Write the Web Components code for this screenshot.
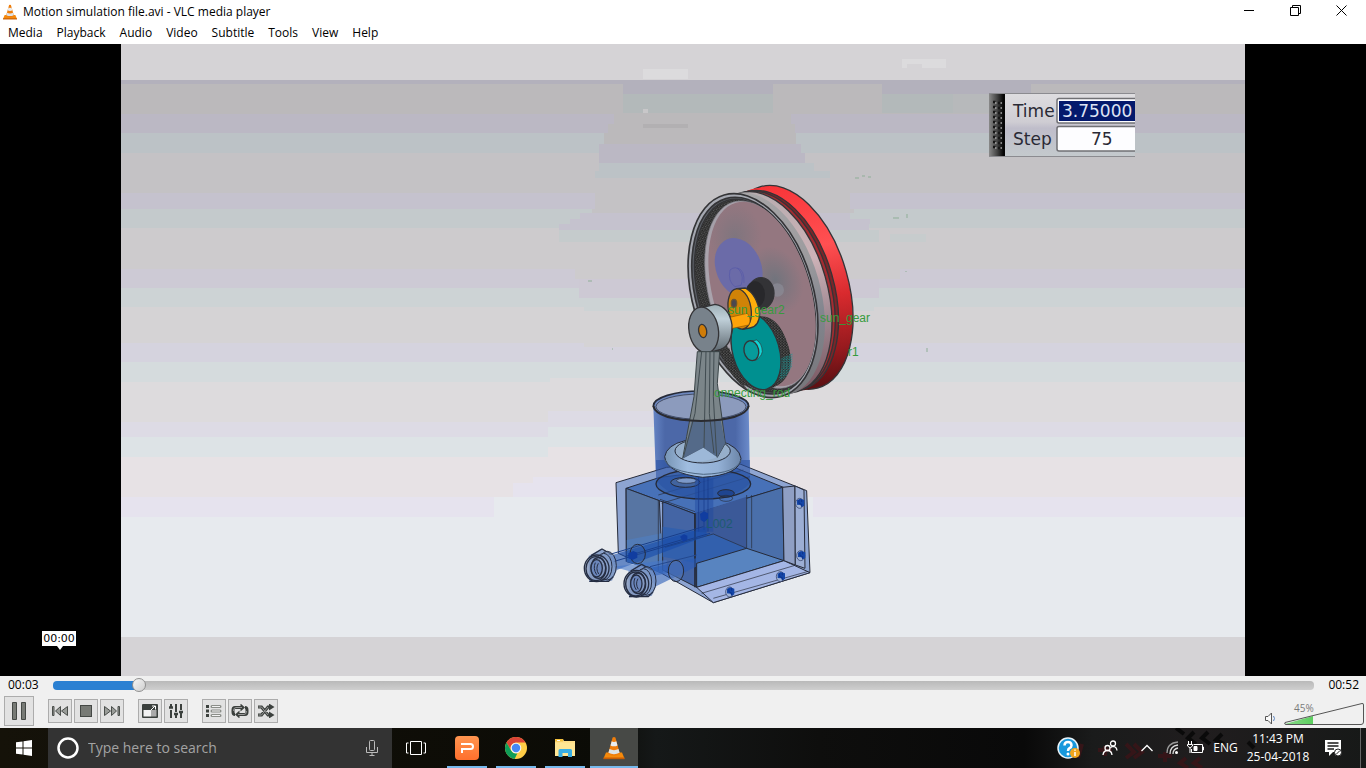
<!DOCTYPE html>
<html lang="en">
<head>
<meta charset="utf-8">
<title>Motion simulation file.avi - VLC media player</title>
<style>
html,body{margin:0;height:100%}
body{font:12px/16px "Open Sans","Noto Sans",sans-serif;color:#000;background:#fff;overflow:hidden}
</style>
</head>
<body>
<desktop-screen></desktop-screen>
<script>
const define = (name, html) => {
  const tpl = document.createElement('template');
  tpl.innerHTML = html;
  customElements.define(name, class extends HTMLElement {
    constructor() {
      super();
      this.attachShadow({mode: 'open'}).append(tpl.content.cloneNode(true));
    }
  });
};

const cone = (size) => `<svg width="${size}" height="${size}" viewBox="0 0 24 24" aria-hidden="true">
<path d="M4 16.500H20L22.500 22.500H1.500Z" fill="#f58a0c"/><path d="M1.500 21.500H22.500V23.200H1.500Z" fill="#c85d04"/>
<path d="M10.600 1.500Q12 .4 13.400 1.500L18 18Q12 21.500 6 18Z" fill="#ef7d0b"/>
<path d="M9.700 5.300Q12 6.500 14.300 5.300L15.500 9.500Q12 11.200 8.500 9.500Z" fill="#e9edf0"/>
<path d="M7.500 13Q12 15.300 16.500 13L17.600 16.800Q12 19.500 6.400 16.800Z" fill="#dfe3e6"/></svg>`;

define('title-bar', `<style>
:host{display:flex;align-items:center;height:24px;padding:0 2px;background:#fff}
h1{font:inherit;margin:0 0 0 5px;flex:1;white-space:nowrap}
.win{display:flex;align-self:flex-start}
button{width:46px;height:20px;border:0;background:none;padding:0;display:grid;place-items:center}
svg{display:block}
</style>
${cone(16)}<h1>Motion simulation file.avi - VLC media player</h1>
<div class="win">
<button aria-label="Minimize"><svg width="11" height="11"><path d="M0 5.500H10" stroke="#000"/></svg></button>
<button aria-label="Restore"><svg width="11" height="11" fill="none" stroke="#000"><path d="M.5 2.500H8.500V10.500H.5ZM2.500 2.500V.5H10.500V8.500H8.500"/></svg></button>
<button aria-label="Close"><svg width="11" height="11" stroke="#000"><path d="M.5 .5L10.500 10.500M10.500 .5L.5 10.500"/></svg></button>
</div>`);

define('menu-bar', `<style>
:host{display:block;height:20px;background:#fff}
nav{display:flex;gap:14px;padding:0 8px}
button{font:inherit;color:inherit;border:0;background:none;padding:0;line-height:18px}
</style>
<nav aria-label="Main menu"><button>Media</button><button>Playback</button><button>Audio</button><button>Video</button><button>Subtitle</button><button>Tools</button><button>View</button><button>Help</button></nav>`);

/* background bands: [top, bottom, colour] */
const bands = [[44,80,'#d5d3d6'],[80,84,'#b3b1bc'],[84,114,'#bbb9bb'],[114,133,'#bbb8c4'],[133,153,'#bcc2c6'],[153,193,'#c4c2c5'],[193,209,'#c5c2ce'],[209,228,'#c4cacc'],[228,269,'#cdcbcd'],[269,288,'#cdcad5'],[288,307,'#cdd3d5'],[307,343,'#d5d3d5'],[343,362,'#d5d3de'],[362,382,'#d5dbdd'],[382,422,'#dddbdd'],[422,437,'#dddbe5'],[437,457,'#dde3e6'],[457,497,'#e7e2e5'],[497,517,'#e6e3ee'],[517,637,'#e7eaee'],[637,676,'#d5d3d6']]
  .map(([a,b,c]) => `<rect x="121" y="${a}" width="1124" height="${b-a}" fill="${c}"/>`).join('');
/* patches where the compressed frame lags behind: [x, y, w, h, colour] */
const patches = [[623,80,150,14,'#b3b1bc'],[623,94,150,19,'#b3b9ba'],[882,80,149,14,'#b3b1bc'],[882,94,71,19,'#b3b9ba'],[953,94,36,19,'#b7b9bb'],[614,113,177,11,'#bbb9bb'],[608,124,187,9,'#bbb9bb'],[604,133,192,11,'#bbb9bb'],[599,144,202,9,'#bbb8c4'],[599,153,206,10,'#bbb8c4'],[599,163,215,8,'#bcc2c6'],[595,171,235,7,'#bcc2c6'],[595,178,255,31,'#c4c2c5'],[592,209,262,4,'#c4c2c5'],[580,213,270,6,'#c5c2ce'],[570,219,300,5,'#c5c2ce'],[559,224,310,6,'#c5c2ce'],[559,230,320,12,'#c5cbcc'],[890,234,36,8,'#c7cccd'],[565,242,325,27,'#cdcbcd'],[575,269,325,10,'#cdcbcd'],[579,279,300,19,'#cdc9d4'],[584,298,290,13,'#cdd3d5'],[584,311,200,36,'#d5d3d5'],[550,378,170,4,'#dddbdd'],[548,411,150,16,'#dddbe5'],[548,427,150,20,'#dde3e6'],[548,447,150,30,'#e7e2e5'],[533,477,160,6,'#e6e3ee'],[513,483,180,14,'#e6e3ee'],[494,497,319,20,'#e7eaee'],[643,69,45,10,'#dcdbdd'],[902,59,44,9,'#dcdbdd'],[643,124,45,4,'#b2b0b2'],[643,109,5,4,'#c8c7c9'],[907,64,15,4,'#d5d3d6']]
  .map(([x,y,w,h,c]) => `<rect x="${x}" y="${y}" width="${w}" height="${h}" fill="${c}"/>`).join('');
const dots = Array.from({length: 10}, (_, i) => `<path d="M993 ${102+i*5}h2.500M998 ${103+i*5}h2.500" stroke="#161616" stroke-width="2.500"/><path d="M995 ${103+i*5}h1.500M1000.500 ${103+i*5}h1.500" stroke="#aaa" stroke-width="1.500"/>`).join('');
const bolt = (x, y) => `<ellipse cx="${x-3}" cy="${y}" rx="12" ry="15" fill="#9fb2d6" stroke="#26345a" stroke-width="2"/><path d="M${x-11} ${y-9}l9 -5 13 4v17l-8 4 -4 -6 -10 -1z" fill="#1446a8" stroke="none"/><path d="M${x-5} ${y-10}v10l8 3v8M${x+3} ${y-12}v8" stroke="#082a80" stroke-width="2" fill="none"/>`;
const fitting = (x, y) => `<g transform="translate(${x} ${y})" stroke="#252d42" stroke-width="4">
<path d="M-32 -34L5 -56 42 -32 52 10 38 40 -30 44Z" fill="#6f8cc0" fill-opacity=".75" stroke="none"/>
<path d="M-25 -35L8 -55 38 -38M-30 42H28L42 28" fill="none"/>
<ellipse cx="24" cy="-5" rx="27" ry="43" fill="#7893c4" fill-opacity=".5" stroke-width="3"/><ellipse cx="13" cy="-2" rx="25" ry="40" fill="#88a0cb" fill-opacity=".4" stroke-width="3"/>
<ellipse cx="-8" cy="3" rx="37" ry="40" fill="#8ca1c8" fill-opacity=".5"/><ellipse cx="-10" cy="4" rx="30" ry="36" fill="#8095bb" fill-opacity=".6"/>
<ellipse cx="-3" cy="2" rx="22" ry="31" fill="none"/><ellipse cx="-8" cy="3" rx="17" ry="26" fill="#6b86bb"/><path d="M-12 -14Q-20 4 -8 22M-3 -12Q-12 4 -2 20" fill="none" stroke-width="3"/></g>`;

define('video-stage', `<style>
:host{display:block;background:#000;min-height:0}
svg{display:block;width:100%;height:100%}
.tag{font:12px "Liberation Sans",sans-serif;fill:#369b3c}
.panel{font:17px "DejaVu Sans",sans-serif;fill:#2a2a35}
.panel .selected{fill:#dfe4f4}
</style>
<svg viewBox="121 44 1124 632" role="img" aria-label="Epicyclic gear engine simulation">
<defs>
<linearGradient id="red" x1="0" y1="0" x2="0" y2="1"><stop offset="0" stop-color="#f83438"/><stop offset=".35" stop-color="#ff5052"/><stop offset=".6" stop-color="#d92a2e"/><stop offset=".85" stop-color="#961a1e"/><stop offset="1" stop-color="#5c1013"/></linearGradient>
<linearGradient id="rim" x1="0" y1="0" x2="0" y2="1"><stop offset="0" stop-color="#a8a6a8"/><stop offset=".4" stop-color="#9c9b9e"/><stop offset=".65" stop-color="#83868f"/><stop offset="1" stop-color="#77777b"/></linearGradient>
<linearGradient id="pink" x1="0" y1="0" x2="0" y2="1"><stop offset="0" stop-color="#b7acaf"/><stop offset=".4" stop-color="#cdb2b7"/><stop offset=".7" stop-color="#9d8690"/><stop offset="1" stop-color="#7c5a64"/></linearGradient>
<linearGradient id="steel" x1="0" y1="0" x2="0" y2="1"><stop offset="0" stop-color="#9fb0b7"/><stop offset=".3" stop-color="#c0d0d9"/><stop offset="1" stop-color="#5a646c"/></linearGradient>
<radialGradient id="haze"><stop offset="0" stop-color="#71747d"/><stop offset="1" stop-color="#71747d" stop-opacity="0"/></radialGradient>
<linearGradient id="grip"><stop offset="0" stop-color="#8a8a8a"/><stop offset=".5" stop-color="#444"/><stop offset=".9" stop-color="#050505"/></linearGradient>
<linearGradient id="panelbg" x1="0" y1="0" x2="0" y2="1"><stop offset="0" stop-color="#dedde0"/><stop offset=".45" stop-color="#cfcdd3"/><stop offset=".55" stop-color="#bfbdca"/><stop offset="1" stop-color="#c4cacd"/></linearGradient>
<linearGradient id="collar" x1="0" x2="1"><stop offset="0" stop-color="#7794b4"/><stop offset=".3" stop-color="#a0bde0"/><stop offset=".7" stop-color="#94b1d6"/><stop offset="1" stop-color="#6b85a8"/></linearGradient>
<linearGradient id="cyl" x1="0" x2="1"><stop offset="0" stop-color="#6484c4"/><stop offset=".12" stop-color="#4c68a8"/><stop offset=".85" stop-color="#4c68a8"/><stop offset="1" stop-color="#6d8dcc"/></linearGradient>
<pattern id="teeth" width="9" height="8" patternUnits="userSpaceOnUse"><rect width="9" height="8" fill="#242424"/><path d="M0 2h4M4 6h4" stroke="#8a8a8a" stroke-width="2"/></pattern>
<pattern id="tealteeth" width="8" height="7" patternUnits="userSpaceOnUse"><path d="M0 1h5M3 5h5" stroke="#109999" stroke-width="2"/></pattern>
</defs>
${bands}${patches}
<g stroke="#8fae97"><path d="M855 178h4M862 176h3M868 177h3M893 218h6M907 214v4M906 271v1M927 348v4M612 349h1M588 281h4"/></g>

<!-- recorder read-out -->
<rect x="989" y="93" width="146" height="64" fill="url(#panelbg)"/>
<path d="M989 93.500H1135M989 156.500H1135" stroke="#8b8b90"/>
<rect x="989" y="94" width="16" height="62" fill="url(#grip)"/>${dots}
<path d="M1135 98.500H1059a2 2 0 0 0 -2 2V121a2 2 0 0 0 2 2H1135M1135 126.500H1059a2 2 0 0 0 -2 2V149a2 2 0 0 0 2 2H1135" fill="#fdfdff" stroke="#707074" stroke-width="1.500"/>
<rect x="1059" y="101" width="76" height="20" fill="#04196c"/>
<g class="panel"><text x="1013" y="117">Time</text><text x="1013" y="145">Step</text><text x="1062" y="117" class="selected">3.75000</text><text x="1091" y="145">75</text></g>

<!-- wheel and gears -->
<g transform="translate(660 170) scale(.3333)" stroke="#343437" stroke-width="4">
<ellipse cx="388" cy="352" rx="177" ry="314" transform="rotate(-16 388 352)" fill="url(#red)"/>
<ellipse cx="360" cy="358" rx="177" ry="312" transform="rotate(-16 360 358)" fill="url(#red)" stroke="none"/>
<ellipse cx="346" cy="361" rx="176" ry="308" transform="rotate(-16 346 361)" fill="#7b2529"/>
<ellipse cx="336" cy="363" rx="176" ry="308" transform="rotate(-16 336 363)" fill="#a32c31"/>
<ellipse cx="326" cy="367" rx="176" ry="310" transform="rotate(-16 326 367)" fill="url(#pink)"/>
<ellipse cx="304" cy="372" rx="177" ry="313" transform="rotate(-16 304 372)" fill="url(#rim)" stroke="none"/>
<ellipse cx="279" cy="377" rx="181" ry="314" transform="rotate(-16 279 377)" fill="#a5a8b1" stroke-width="5"/>
<ellipse cx="281" cy="377" rx="172" ry="303" transform="rotate(-16 281 377)" fill="#5b5f66" stroke-width="5"/>
<ellipse cx="283" cy="377" rx="166" ry="297" transform="rotate(-16 283 377)" fill="url(#teeth)"/>
<ellipse cx="300" cy="374" rx="151" ry="289" transform="rotate(-16 300 374)" fill="#a9a3ac" stroke="#888890" stroke-width="2"/>
<ellipse cx="306" cy="372" rx="146" ry="285" transform="rotate(-16 306 372)" fill="#947780" stroke="none"/>
<ellipse cx="225" cy="200" rx="80" ry="100" fill="url(#haze)" stroke="none" opacity=".6"/>
<ellipse cx="345" cy="330" rx="80" ry="105" transform="rotate(-25 345 330)" fill="url(#haze)" stroke="none"/>
<ellipse cx="236" cy="293" rx="68" ry="92" transform="rotate(-22 236 293)" fill="#6b6ba8" stroke="none"/>
<path d="M210 300q18 -15 30 3t3 43l-18 4q-22 -15 -15 -50zM232 294q22 5 20 45" fill="none" stroke="#5558a8" stroke-width="2"/>
<circle cx="352" cy="360" r="20" fill="#8d8f9b" stroke="none" opacity=".6"/>
<ellipse cx="303" cy="370" rx="39" ry="47" fill="#333336"/><ellipse cx="285" cy="374" rx="30" ry="40" fill="#28282b" stroke="none"/>
<path d="M210 465L288 440Q345 430 375 500T385 610Q365 655 305 660L240 640Z" fill="url(#teeth)" stroke="none"/>
<path d="M350 570L398 550 396 590Q380 625 358 632Z" fill="url(#tealteeth)" stroke="none"/>
<path d="M180 545L208 535Q222 605 262 660L238 640Q195 595 180 545Z" fill="url(#teeth)" stroke="none"/>
<ellipse cx="288" cy="544" rx="70" ry="118" transform="rotate(-16 288 544)" fill="#009090"/>
<path d="M272 514L290 510Q306 520 307 545 304 562 285 572L278 570Z" fill="#11d5d5" stroke-width="2"/>
<ellipse cx="274" cy="542" rx="22" ry="30" transform="rotate(-12 274 542)" fill="#079b9b"/>
<path d="M230 356L256 354Q292 375 299 430 298 470 270 474L248 478Z" fill="#ffae0b"/>
<ellipse cx="239" cy="417" rx="34" ry="61" transform="rotate(-10 239 417)" fill="#d08307"/>
<path d="M205 443L262 430Q276 448 266 465L208 477Z" fill="#fda30a" stroke="#8d5603" stroke-width="2"/>
<ellipse cx="222" cy="400" rx="8" ry="12" fill="#4b4850" stroke="#6c5530"/>
<path d="M132 411L165 403Q208 410 216 465 217 525 182 538L145 549Z" fill="url(#steel)"/>
<ellipse cx="131" cy="480" rx="44" ry="69" transform="rotate(-10 131 480)" fill="#78828b"/>
<ellipse cx="128" cy="483" rx="12" ry="20" transform="rotate(-10 128 483)" fill="#cf7c08"/>
</g>

<!-- cylinder, piston and tank -->
<g transform="translate(570 380) scale(.3333)" stroke="#252a38" stroke-width="3" stroke-linejoin="round">
<ellipse cx="393" cy="78" rx="143" ry="45" fill="#6d87bd" stroke-width="5"/><ellipse cx="393" cy="80" rx="135" ry="38" fill="#8c9bbd" stroke-width="2"/>
<path d="M250 78Q260 120 393 123 525 120 536 78L540 300Q400 370 258 300Z" fill="url(#cyl)" stroke="none"/>
<path d="M138 308L290 262 500 248 710 332 720 578 430 668 275 580 145 520Z" fill="#8ea5d2"/>
<path d="M168 325L270 292 500 265 640 322 375 402Z" fill="#4771b8"/>
<path d="M168 325L268 362 278 575 170 545Z" fill="#5775a3"/>
<path d="M170 480L275 460 278 580 170 545Z" fill="#527bb6" stroke="none"/>
<path d="M278 365L375 402 380 622 278 570Z" fill="#4465a5"/>
<path d="M375 402L638 322 642 542 380 622Z" fill="#4a6faa"/>
<path d="M375 400L530 350V505L380 550Z" fill="#3b5998" stroke="none"/>
<path d="M278 440L430 462 530 505 380 550 278 530Z" fill="#3260ad" stroke="none"/>
<path d="M380 550L530 505 642 542 380 622Z" fill="#5884c0"/>
<path d="M380 622L642 542 720 578 430 668Z" fill="#a4b6e5"/>
<path d="M395 640L672 557M430 655L715 574M265 362V572" fill="none" stroke-width="2"/>
<path d="M638 322L675 318 676 555 642 542Z" fill="#8f9fc4"/><path d="M675 318L702 330 705 565 676 555Z" fill="#9caed4"/>
<path d="M270 358L375 395 M430 462L530 505V345M430 462L285 502M265 345L520 270M275 370L540 290M545 345V505M168 325V545" fill="none" stroke-width="2"/>
<path d="M258 295V240H540V310Q500 355 400 357 280 350 258 295Z" fill="#2c53a5" opacity=".6" stroke="none"/>
<ellipse cx="400" cy="312" rx="142" ry="45" fill="#2853a2" fill-opacity=".5" stroke-width="4"/>
<ellipse cx="346" cy="307" rx="44" ry="15" fill="#42649f"/><ellipse cx="350" cy="302" rx="30" ry="8" fill="#7c99c9" stroke-width="2"/>
<ellipse cx="468" cy="340" rx="25" ry="11" fill="#1f4590"/><ellipse cx="468" cy="355" rx="20" ry="9" fill="none" stroke-width="2"/>
<path d="M375 295H430V455H375Z" fill="#1d48a0" opacity=".45" stroke="none"/><path d="M386 290V455M402 290V450M414 290V455" fill="none" stroke="#15388b" stroke-width="2"/>
<path d="M375 400V622" stroke-width="5"/>
<path d="M110 530L410 440V468L140 570Z" fill="#1449aa" opacity=".6" stroke="none"/><path d="M110 526L400 440M130 545L420 460M165 530L340 478" fill="none" stroke="#183e8b"/>
<path d="M130 560L290 540 290 580 240 590Z" fill="#4676c8" opacity=".6" stroke="none"/>
<path d="M235 565L378 535 378 560 255 620Z" fill="#2a5cb8" opacity=".6" stroke="none"/><path d="M240 560L380 525" stroke="#23488f" fill="none"/>
<ellipse cx="203" cy="522" rx="23" ry="29" fill="#365b9c" fill-opacity=".3"/><ellipse cx="318" cy="573" rx="23" ry="32" fill="#5275b3" fill-opacity=".5"/>
${fitting(88,562)}${fitting(207,608)}
<path d="M175 520l15 -7 12 5v15l-15 7 -12 -5zM330 470l12 -7 10 4v12l-12 6zM390 402l12 -8 12 6v18l-12 8 -10 -6z" fill="#113da0" stroke="none"/>
${bolt(692,370)}${bolt(695,527)}${bolt(634,590)}${bolt(482,636)}
<path d="M284 230Q290 195 345 182H450Q508 200 513 235 510 285 398 292 290 280 284 230Z" fill="url(#collar)"/>
<path d="M284 238Q295 275 400 283 500 280 513 240" fill="none" stroke="#4c6580"/>
<ellipse cx="398" cy="213" rx="83" ry="36" fill="#96afcb"/>
<path d="M382 -85H449L442 10 466 190 442 232 400 203 338 236 350 170 372 50Z" fill="#7b8589" stroke="#3a4447"/>
<path d="M366 120H452L466 190 442 232 400 203 338 236Z" fill="#4e6589" opacity=".85" stroke="none"/>
<path d="M395 -85L375 100 340 232M408 -85L402 203M420 -85L418 100 432 220M432 -85L430 50 440 230" fill="none" stroke="#404b50"/>
<path d="M338 236L400 203 442 232Q380 255 338 236Z" fill="#9db8d8" stroke="none"/>
<path d="M250 78Q260 120 393 123 525 120 536 78" fill="none" stroke="#2a2b30" stroke-width="6"/>
</g>
<g class="tag"><text x="728" y="314">sun_gear2</text><text x="820" y="322">sun_gear</text><text x="848" y="356">r1</text><text x="714" y="397">onnecting_rod</text><text x="706" y="528" style="fill:#1d5b70">L002</text></g>
</svg>`);

define('seek-bar', `<style>
:host{display:flex;align-items:center;gap:14px;height:18px;padding:0 7px 0 8px;position:relative}
input{flex:1;min-width:0;margin:0;height:16px;appearance:none;background:none}
input::-webkit-slider-runnable-track{height:9px;border-radius:4px;background:linear-gradient(90deg,#2b80d2 86px,transparent 86px),linear-gradient(#b9b9b9,#cfcfcf)}
input::-webkit-slider-thumb{appearance:none;width:14px;height:14px;margin-top:-3px;border-radius:50%;border:1px solid #909090;background:linear-gradient(135deg,#f5f5f5,#cfcfcf);box-sizing:border-box}
.tip{position:absolute;left:42px;bottom:48px;width:34px;height:15px;background:#fff;font:11px/15px "DejaVu Sans",sans-serif;text-align:center}
.tip::after{content:"";position:absolute;left:15px;top:15px;border:3px solid transparent;border-top:4px solid #fff;border-bottom:0}
</style>
<time>00:03</time><input type="range" aria-label="Playback position" min="0" max="1000" value="64"><time>00:52</time><output class="tip">00:00</output>`);

define('tool-button', `<style>
:host{display:block;width:24px;height:24px}
:host([large]){width:30px;height:30px}
button{width:100%;height:100%;border:1px solid #acacac;background:#e2e2e2;padding:0;display:grid;place-items:center}
</style><button><slot></slot></button>`);

define('volume-control', `<style>
:host{display:flex;align-items:flex-end;gap:8px}
.mute{border:0;background:none;padding:0;height:14px}
svg{display:block}
.wedge{position:relative;width:80px;height:24px}
input{position:absolute;inset:0;width:100%;height:100%;margin:0;opacity:0}
text{font:10px "Open Sans",sans-serif;fill:#7a7a7a}
</style>
<button class="mute" aria-label="Mute"><svg width="12" height="14" fill="none" stroke="#555"><path d="M1.500 4.500H4L7.500 1V12L4 8.500H1.500Z" fill="#fafafa"/><path d="M9.500 4q2 2.500 0 5" stroke="#5a84c0"/></svg></button>
<div class="wedge"><svg width="80" height="24"><defs><linearGradient id="g"><stop offset="0" stop-color="#8bd88b"/><stop offset="1" stop-color="#5bcf5e"/></linearGradient></defs><path d="M1 22L29 14V22.500H1Z" fill="url(#g)"/><path d="M1 20.500L78 1.500Q79.500 1 79.500 3V20Q79.500 22.500 77 22.500H2Q0 22.500 1 20.500Z" fill="none" stroke="#555"/><text x="10" y="10">45%</text></svg><input type="range" aria-label="Volume" value="45"></div>`);

const ink = 'fill="none" stroke="#3b403d"';
define('player-controls', `<style>
:host{display:flex;align-items:center;gap:14px;height:34px;padding:0 2px 0 4px}
.group{display:flex;gap:2px}
volume-control{margin-left:auto;align-self:flex-end;margin-bottom:2px}
svg{display:block}
</style>
<tool-button large><svg width="18" height="20" fill="#777a75" stroke="#444845"><path d="M2.500 1.500H6.500V18.500H2.500ZM11.500 1.500H15.500V18.500H11.500Z"/></svg></tool-button>
<div class="group">
<tool-button><svg width="18" height="12" fill="#999c98" stroke="#4a4e4b"><path d="M1.500 1.500H3V10.500H1.500ZM9.500 1.500V10.500L4.500 6ZM16.500 1.500V10.500L10.500 6Z"/></svg></tool-button>
<tool-button><svg width="14" height="14"><rect x="1.500" y="1.500" width="11" height="11" fill="#777a75" stroke="#444845"/></svg></tool-button>
<tool-button><svg width="18" height="12" fill="#999c98" stroke="#4a4e4b"><path d="M16.500 1.500H15V10.500H16.500ZM8.500 1.500V10.500L13.500 6ZM1.500 1.500V10.500L7.500 6Z"/></svg></tool-button>
</div>
<div class="group">
<tool-button><svg width="18" height="16"><rect x="1" y="1" width="16" height="14" rx="1" fill="#3b403d"/><path d="M2.500 7H10V13.500H2.500Z" fill="#f2f2f2"/><path d="M10 7V13.500H15.500V7Z" fill="#aaa"/><path d="M10 7L14 3M11 3H14.500V6.500" stroke="#fff" fill="none"/></svg></tool-button>
<tool-button><svg width="16" height="16" ${ink} stroke-width="2"><path d="M3 1V5M3 7V15M8 1V9M8 12V15M13 1V7M13 10V15"/><path d="M1 4.500H5M6 11H10M11 9H15" stroke-width="2.500"/></svg></tool-button>
</div>
<div class="group">
<tool-button><svg width="16" height="14"><path d="M1.500 1v3M1.500 5.500v3M1.500 10v3" stroke="#3b403d" stroke-width="3"/><path d="M6 2.500H14M6 7H14M6 11.500H14" stroke="#8b8e89" stroke-width="3" stroke-linecap="round"/><path d="M6 2.500H14M6 7H14M6 11.500H14" stroke="#f2f2f2"/></svg></tool-button>
<tool-button><svg width="18" height="14" ${ink} stroke-width="3"><path d="M12 10.500H14Q16 10.500 16 8V6Q16 3.500 14 3.500M6 3.500H4Q2 3.500 2 6V8Q2 10.500 4 10.500M6 3.500H11M7 10.500H13"/><path d="M9.500 -.5L14 3.500 9.500 7.500ZM8.500 6.500L4 10.500 8.500 14.500Z" fill="#3b403d" stroke="none"/><path d="M2.500 7Q2.500 3.500 5 3.500H11M15.500 7Q15.500 10.500 13 10.500H7" stroke="#999" stroke-width="1"/></svg></tool-button>
<tool-button><svg width="18" height="14" ${ink} stroke-width="3"><path d="M1 3H4.500L11 11H13M1 11H4.500L11 3H13"/><path d="M12 -.5L17.500 3 12 6.500ZM12 7.500L17.500 11 12 14.500Z" fill="#3b403d" stroke="none"/><path d="M1.500 3H4.500L11 11M1.500 11H4.500L11 3" stroke="#999" stroke-width="1"/></svg></tool-button>
</div>
<volume-control></volume-control>`);

define('task-app', `<style>
:host{display:block;width:48px;height:40px}
button{width:100%;height:100%;border:0;padding:0;background:none;display:grid;place-items:center;position:relative}
:host([open]) button::after{content:"";position:absolute;inset:auto 4px 0;height:2px;background:#76b9ed}
:host([active]) button{background:#474946}
:host([active]) button::after{inset:auto 0 0}
</style><button><slot></slot></button>`);

define('system-tray', `<style>
:host{display:flex;align-items:center;color:#fff;font-size:12px;line-height:18px;height:40px;position:relative}
button{border:0;background:none;padding:0;color:inherit;font:inherit;display:block;position:relative}
svg{display:block}
.wallpaper{position:absolute;right:0;top:0}
.help{width:24px;margin-right:21px}.people{width:16px;margin-right:22px}.up{width:14px;margin-right:11px}
.wifi{width:16px;margin-right:6px}.bat{width:18px;margin-right:8px}
.lang{width:25px;white-space:nowrap}.clock{width:80px;text-align:center;white-space:nowrap}.note{width:18px;margin:0 18px 0 6px}
.peek{width:5px;height:40px;border-left:1px solid #666;position:relative}
</style>
<svg class="wallpaper" width="330" height="40" aria-hidden="true" fill="none" stroke-width="4"><path d="M46 16l-4 14M62 22h14M69 18v10M90 16l8 8 -8 6M98 16l8 8 -8 6M122 28h14M129 24v10M150 30l-6 5 8 5M164 30l-6 5 8 5" stroke="#351518"/><path d="M140 0l8 6M158 4l-6 6 8 6M172 4l-6 6 8 6M186 6l-6 6 8 4M212 14l6 6" stroke="#0a0a0a"/></svg>
<button class="help" aria-label="Help"><svg width="24" height="24"><circle cx="11" cy="12" r="10" fill="#1798dc" stroke="#e9f4fa" stroke-width="1.500"/><path d="M7.500 9.500Q7.500 6 11 6T14.500 9.500Q14.500 11 12.500 12.200 11 13 11 15" fill="none" stroke="#fff" stroke-width="2.500"/><circle cx="11" cy="18" r="1.500" fill="#fff"/><circle cx="18" cy="17" r="5" fill="#f0a51d"/><path d="M18 16V20M18 13.500V14.700" stroke="#fff" stroke-width="1.500"/></svg></button>
<button class="people" aria-label="People"><svg width="16" height="16" fill="none" stroke="#fff" stroke-width="1.300"><circle cx="5.500" cy="8" r="2.500"/><path d="M1 15Q1.500 10.500 5.500 10.500T10 15"/><circle cx="11" cy="3.500" r="2.500"/><path d="M8.500 8Q9.500 6.300 11 6.300 14.500 6.500 15 10.500"/></svg></button>
<button class="up" aria-label="Show hidden icons"><svg width="14" height="10" fill="none" stroke="#fff" stroke-width="1.300"><path d="M1.500 8L7 2.500 12.500 8"/></svg></button>
<button class="wifi" aria-label="Network"><svg width="16" height="16" fill="none" stroke="#ddd" stroke-width="1.300"><path d="M2 13Q2 3 13 2" stroke="#999"/><path d="M8 14Q8 9 13 8M5 14Q5 6 13 5"/><circle cx="11.500" cy="12.500" r="1.500" fill="#fff" stroke="none"/></svg></button>
<button class="bat" aria-label="Battery"><svg width="18" height="14" fill="none" stroke="#fff"><path d="M6.500 3.500H15.500V11.500H4.500V8M15.500 6H16.500V9H15.500M1.500 0V3M4.500 0V3M.5 3.500H5.500V5L3 7 .5 5ZM3 7V12"/><path d="M7 5.500H10V9.500H7Z" fill="#fff"/></svg></button>
<button class="lang">ENG</button>
<button class="clock"><time>11:43 PM</time><br><time>25-04-2018</time></button>
<button class="note" aria-label="Notifications"><svg width="18" height="18"><path d="M1 1H17V13H9L5 17V13H1Z" fill="#fff"/><path d="M3.500 4H14.500M3.500 7H14.500M3.500 10H10" stroke="#1a1a1a" stroke-width="1.300"/><circle cx="14" cy="13.500" r="3.500" fill="#fff" stroke="#222"/><path d="M12 15.500L16 11.500" stroke="#222"/></svg></button>
<div class="peek"></div>`);

define('task-bar', `<style>
:host{display:flex;height:40px;background:linear-gradient(90deg,#151209 0,#0b0b06 44%,#151818 48%,#0e0e0d 60%,#090909 75%,#1a1b1b 80%,#201d1e 88%,#171918)}
.search{display:flex;align-items:center;width:344px;background:#333;box-sizing:border-box;padding:0 12px 0 8px;gap:8px}
.search input{flex:1;min-width:0;border:0;background:none;padding:0;font:14px/20px "Open Sans","Noto Sans",sans-serif;color:#a3a3a3;outline:0}
.search input::placeholder{color:#a3a3a3;opacity:1}
.search button{border:0;background:none;padding:0}
.apps{display:flex;gap:1px;margin-left:3px}
system-tray{margin-left:auto}
svg{display:block}
</style>
<task-app><svg width="16" height="16" fill="#fff"><path d="M0 2.300L6.500 1.400V7.500H0ZM7.500 1.200L16 0V7.500H7.500ZM0 8.500H6.500V14.600L0 13.700ZM7.500 8.500H16V16L7.500 14.800Z"/></svg></task-app>
<label class="search"><svg width="24" height="24"><circle cx="12" cy="12" r="9.500" fill="none" stroke="#fff" stroke-width="2.500"/></svg><input type="text" placeholder="Type here to search" aria-label="Search"><button aria-label="Voice search"><svg width="16" height="18" fill="none" stroke="#bbb"><rect x="5.500" y="1.500" width="5" height="10" rx="1"/><path d="M2.500 8V13.500H13.500V8M8 13.500V16.500M5.500 16.500H10.500"/></svg></button></label>
<task-app><svg width="20" height="16" fill="none" stroke="#fff"><path d="M4.500 1.500H15.500V14.500H4.500ZM2.500 3H.5V13H2.500M17.500 3H19.500V13H17.500"/></svg></task-app>
<div class="apps">
<task-app open><svg width="24" height="24"><defs><linearGradient id="p" x1="0" y1="0" x2="0" y2="1"><stop stop-color="#ff9550"/><stop offset="1" stop-color="#ff6f2c"/></linearGradient></defs><rect width="24" height="24" rx="4" fill="url(#p)"/><path d="M6 8H15.500Q18 8 18 10.500T15.500 13H7V17" fill="none" stroke="#fff" stroke-width="2"/></svg></task-app>
<task-app open><svg width="22" height="22" viewBox="0 0 24 24"><circle cx="12" cy="12" r="12" fill="#ffcd46"/><path d="M1.600 6A12 12 0 0 1 22.400 6H12A6 6 0 0 0 6.800 15Z" fill="#db4437"/><path d="M1.600 6L6.800 15A6 6 0 0 0 13.500 17.800L10.500 23.900A12 12 0 0 1 1.600 6Z" fill="#0f9d58"/><circle cx="12" cy="12" r="5.800" fill="#f4f4f4"/><circle cx="12" cy="12" r="4.600" fill="#4688f4"/></svg></task-app>
<task-app open><svg width="22" height="18"><path d="M1 0H9L10 2H21V17H1Z" fill="#ffe08a"/><path d="M1 0H9V2.500H1Z" fill="#f4c13c"/><path d="M3 1.500H6" stroke="#fff"/><path d="M1 4H21V17H1Z" fill="#ffe694"/><path d="M4.500 18V11.500Q4.500 10 6 10H16.500Q18 10 18 11.500V18H14V14H8.500V18Z" fill="#38aee4"/></svg></task-app>
<task-app open active>${cone(24)}</task-app>
</div>
<system-tray></system-tray>`);

define('desktop-screen', `<style>
:host{display:grid;grid-template-rows:auto auto minmax(0,1fr) auto auto;height:100vh}
.deck{background:#f0f0f0}
</style>
<title-bar></title-bar><menu-bar></menu-bar><video-stage></video-stage>
<div class="deck"><seek-bar></seek-bar><player-controls></player-controls></div>
<task-bar></task-bar>`);
</script>
</body>
</html>
